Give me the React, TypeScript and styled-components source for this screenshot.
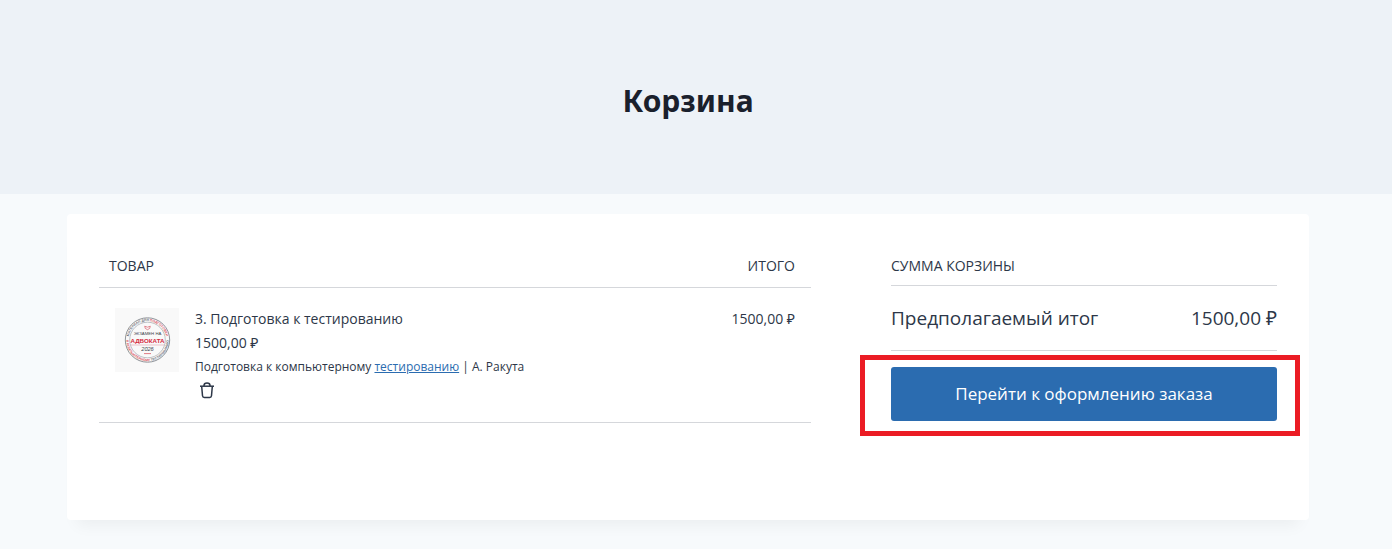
import React from "react";
import styled, { createGlobalStyle } from "styled-components";

const GlobalStyle = createGlobalStyle`
  *, *::before, *::after { box-sizing: border-box; }
  body {
    margin: 0;
    background: #f7fafc;
    color: #2d3748;
    font-family: "Open Sans", "Noto Sans", sans-serif;
    font-size: 14px;
    line-height: 24px;
  }
`;

const Hero = styled.header`
  display: flex;
  align-items: center;
  justify-content: center;
  height: 194px;
  padding: 8px 16px 0 0;
  background: #edf2f7;
`;

const Title = styled.h1`
  margin: 0;
  color: #1a202c;
  font-family: "Noto Sans", sans-serif;
  font-size: 30px;
  line-height: 48px;
  font-weight: 700;
`;

const Main = styled.main`
  padding: 20px 83px 28px 67px;
`;

const Card = styled.section`
  display: grid;
  grid-template-columns: minmax(0, 712fr) minmax(0, 386fr);
  column-gap: 80px;
  align-items: start;
  min-height: 306px;
  padding: 32px;
  background: #fff;
  border-radius: 4px;
  box-shadow: 0 15px 15px -10px rgba(0, 0, 0, 0.05);
`;

const Items = styled.table`
  width: 100%;
  border-collapse: separate;
  border-spacing: 0;
`;

const HeadCell = styled.th<{ $end?: boolean }>`
  padding: ${(p) => (p.$end ? "8px 16px 9px 0" : "8px 0 9px 10px")};
  border-bottom: 1px solid #d5d7db;
  font-weight: 400;
  text-align: ${(p) => (p.$end ? "right" : "left")};
  text-transform: uppercase;
`;

const Cell = styled.td<{ $end?: boolean }>`
  padding: ${(p) => (p.$end ? "19px 16px 19px 0" : "19px 0 19px 16px")};
  border-bottom: 1px solid #d5d7db;
  text-align: ${(p) => (p.$end ? "right" : "left")};
  vertical-align: top;
`;

const ImageCell = styled(Cell)`
  width: 80px;
  padding-top: 20px;
`;

const StampImage = styled.svg`
  display: block;
  width: 64px;
  height: 64px;
  background: #f9f9f9;
`;

const Line = styled.div`
  line-height: 24px;
`;

const Description = styled.p`
  margin: 0;
  font-size: 12px;
  line-height: 24px;
`;

const TextLink = styled.a`
  color: #2b6cb0;
  text-decoration: underline;
`;

const RemoveButton = styled.button`
  display: block;
  width: 24px;
  height: 24px;
  padding: 0;
  border: 0;
  background: none;
  color: #2d3748;
  cursor: pointer;

  svg { display: block; }
`;

const Summary = styled.aside`
  min-width: 0;
`;

const SummaryTitle = styled.h2`
  height: 40px;
  margin: 0;
  padding: 8px 0;
  border-bottom: 1px solid #d5d7db;
  font-size: 14px;
  line-height: 24px;
  font-weight: 400;
  text-transform: uppercase;
`;

const TotalRow = styled.div`
  display: flex;
  justify-content: space-between;
  padding: 16px 0;
  border-bottom: 1px solid #d5d7db;
  font-size: 19px;
  line-height: 32px;
`;

const Highlight = styled.div`
  position: relative;
  margin-top: 16px;

  &::after {
    content: "";
    position: absolute;
    inset: -12px -23px -15px -31px;
    border: 5px solid #eb1c24;
    pointer-events: none;
  }
`;

const CheckoutButton = styled.button`
  display: block;
  width: 100%;
  height: 54px;
  border: 0;
  border-radius: 3px;
  background: #2b6cb0;
  color: #fff;
  font-family: inherit;
  font-size: 17px;
  line-height: 24px;
  cursor: pointer;
`;

const Stamp = () => (
  <StampImage viewBox="0 0 64 64" role="img" aria-label="Экзамен на адвоката 2026">
    <defs>
      <path id="ring-top" d="M13.6 32a18.9 18.9 0 0 1 37.8 0" />
      <path id="ring-bottom" d="M11.2 32a21.3 21.3 0 0 0 42.6 0" />
    </defs>
    <g fill="none" stroke="#85898f">
      <circle cx="32.5" cy="32" r="22.2" strokeWidth="0.9" />
      <circle cx="32.5" cy="32" r="17.8" stroke="#a5a8ad" strokeWidth="0.7" />
    </g>
    <g fontFamily="Liberation Sans, sans-serif" fontWeight="700" fontSize="3.4">
      <text fill="#70757c">
        <textPath href="#ring-top" startOffset="50%" textAnchor="middle">
          МАТЕРИАЛ ДЛЯ <tspan fill="#dc5b68">ПОДГОТОВКИ</tspan>
        </textPath>
      </text>
      <text fill="#dc5b68">
        <textPath href="#ring-bottom" startOffset="50%" textAnchor="middle">
          К КОМПЬЮТЕРНОМУ <tspan fill="#70757c">ТЕСТИРОВАНИЮ</tspan>
        </textPath>
      </text>
    </g>
    <path d="M29.7 18.2l2.8 1 2.8-1-.6 2.2-2.2 1.3-2.2-1.3z" fill="none" stroke="#dc6b76" strokeWidth="0.8" />
    <g fontFamily="Liberation Sans, sans-serif" textAnchor="middle">
      <text x="32.5" y="27.2" fontSize="4.3" fill="#41464d">ЭКЗАМЕН НА</text>
      <text x="32.5" y="35" fontSize="6.2" fill="#d52b3d" fontWeight="700">АДВОКАТА</text>
      <text x="32.5" y="43" fontSize="5.6" fill="#41464d" fontStyle="italic">2026</text>
    </g>
    <path d="M16 37h33" stroke="#dfa0a7" strokeWidth="0.6" />
    <path d="M29 45.6h7" stroke="#dc6b76" strokeWidth="0.9" />
  </StampImage>
);

const TrashIcon = () => (
  <svg width="24" height="24" viewBox="0 0 24 24" fill="none" stroke="currentColor" strokeWidth="1.5" aria-hidden="true">
    <path d="M5 7.2h14" />
    <path d="M9 7V6.5C9 5 10.300 4 12 4s3 1 3 2.500V7" />
    <path d="M6.700 7.500l.8 9.300c.1 1.100.8 1.700 1.800 1.700h5.400c1 0 1.700-.6 1.800-1.700l.8-9.300" />
  </svg>
);

export default function App() {
  return (
    <>
      <GlobalStyle />
      <Hero>
        <Title>Корзина</Title>
      </Hero>
      <Main>
        <Card>
          <Items>
            <thead>
              <tr>
                <HeadCell scope="col" colSpan={2}>Товар</HeadCell>
                <HeadCell scope="col" $end>Итого</HeadCell>
              </tr>
            </thead>
            <tbody>
              <tr>
                <ImageCell>
                  <Stamp />
                </ImageCell>
                <Cell>
                  <Line>3. Подготовка к тестированию</Line>
                  <Line>1500,00 ₽</Line>
                  <Description>
                    Подготовка к компьютерному <TextLink href="#testing">тестированию</TextLink> | А. Ракута
                  </Description>
                  <RemoveButton type="button" aria-label="Удалить товар">
                    <TrashIcon />
                  </RemoveButton>
                </Cell>
                <Cell $end>1500,00 ₽</Cell>
              </tr>
            </tbody>
          </Items>
          <Summary>
            <SummaryTitle>Сумма корзины</SummaryTitle>
            <TotalRow>
              <span>Предполагаемый итог</span>
              <span>1500,00 ₽</span>
            </TotalRow>
            <Highlight>
              <CheckoutButton type="button">Перейти к оформлению заказа</CheckoutButton>
            </Highlight>
          </Summary>
        </Card>
      </Main>
    </>
  );
}
